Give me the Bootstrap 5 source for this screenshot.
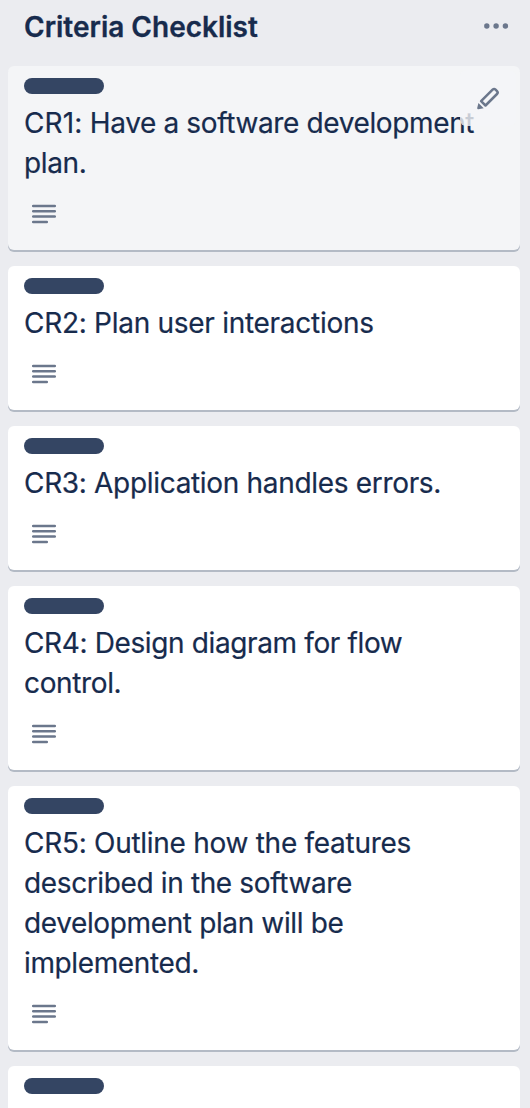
<!DOCTYPE html>
<html lang="en">
<head>
<meta charset="utf-8">
<meta name="viewport" content="width=device-width, initial-scale=1">
<title>Criteria Checklist</title>
<link href="https://cdn.jsdelivr.net/npm/bootstrap@5.3.0/dist/css/bootstrap.min.css" rel="stylesheet">
<style>
  html, body { height: 100%; }
  body { background: #ebecf0; color: #172b4d; font-family: Inter, "Liberation Sans", sans-serif; overflow: hidden; }
  .list-head { height: 66px; padding: 7px 10px 0 16px; }
  .list-title { font-size: 28px; line-height: 40px; font-weight: 600; letter-spacing: 0; -webkit-text-stroke: .3px currentColor; }
  .list-menu { color: #6b778c; width: 28px; height: 8px; margin-top: 15px; }
  .task { background: #fff; border: 0; border-radius: 6px; box-shadow: 0 2px 0 #b3bac5; padding: 12px 16px 0; color: inherit; }
  .task.is-hover { background: #f4f5f7; }
  .task.is-cut { height: 42px; border-radius: 6px 6px 0 0; box-shadow: none; }
  .tag-bar { width: 80px; height: 16px; background: #344563; margin-bottom: 9px; }
  .task-name { font-size: 28px; line-height: 40px; letter-spacing: -.37px; white-space: nowrap; -webkit-text-stroke: .2px currentColor; }
  .medium { letter-spacing: -.32px; }
  .loose { letter-spacing: -.28px; }
  .code { letter-spacing: .1px; }
  .task-meta { height: 67px; padding: 21px 0 0 8px; color: #6b778c; }
  .edit-btn { position: absolute; top: 4px; right: 4px; width: 56px; height: 56px; border-radius: 6px; background: rgba(244,245,247,.8); color: #6b778c; }
</style>
</head>
<body>
<svg class="d-none">
  <symbol id="lines" viewBox="0 0 24 20">
    <path d="M1.2 2H22.8M1.2 7.3H22.8M1.2 12.6H22.8M1.2 18H14.8" fill="none" stroke="currentColor" stroke-width="2.5" stroke-linecap="round"/>
  </symbol>
</svg>
<main class="px-2" style="width:528px">
  <header class="list-head d-flex justify-content-between align-items-start">
    <h2 class="list-title m-0">Criteria Checklist</h2>
    <svg class="list-menu" viewBox="0 0 28 8" fill="currentColor"><circle cx="4.8" cy="4" r="2.7"/><circle cx="14.1" cy="4" r="2.7"/><circle cx="23.4" cy="4" r="2.7"/></svg>
  </header>
  <div class="d-flex flex-column gap-3">
    <article class="card task is-hover">
      <div class="tag-bar rounded-pill"></div>
      <div class="task-name"><span class="code">CR1:</span> Have a software development<br>plan.</div>
      <div class="task-meta"><svg class="d-block" width="24" height="20"><use href="#lines"/></svg></div>
      <button class="edit-btn border-0 p-0" aria-label="Edit card">
        <svg class="d-block" width="56" height="56" viewBox="0 0 56 56">
          <path d="M21.1 31.2L32.6 19.7Q34.1 18.3 35.6 19.7L37 21.1Q38.4 22.6 37 24L25.5 35.5Z" fill="none" stroke="currentColor" stroke-width="2.5" stroke-linejoin="round"/>
          <path d="M18.4 33L23.7 38.2L18.4 39.2Q17 39.3 17.2 38Z" fill="currentColor"/>
        </svg>
      </button>
    </article>
    <article class="card task">
      <div class="tag-bar rounded-pill"></div>
      <div class="task-name loose">CR2: Plan user interactions</div>
      <div class="task-meta"><svg class="d-block" width="24" height="20"><use href="#lines"/></svg></div>
    </article>
    <article class="card task">
      <div class="tag-bar rounded-pill"></div>
      <div class="task-name medium">CR3: Application handles errors.</div>
      <div class="task-meta"><svg class="d-block" width="24" height="20"><use href="#lines"/></svg></div>
    </article>
    <article class="card task">
      <div class="tag-bar rounded-pill"></div>
      <div class="task-name">CR4: Design diagram for flow<br>control.</div>
      <div class="task-meta"><svg class="d-block" width="24" height="20"><use href="#lines"/></svg></div>
    </article>
    <article class="card task">
      <div class="tag-bar rounded-pill"></div>
      <div class="task-name"><span class="loose">CR5: Outline how the features</span><br>described in the software<br>development plan will be<br>implemented.</div>
      <div class="task-meta"><svg class="d-block" width="24" height="20"><use href="#lines"/></svg></div>
    </article>
    <article class="card task is-cut">
      <div class="tag-bar rounded-pill"></div>
    </article>
  </div>
</main>
<script src="https://cdn.jsdelivr.net/npm/bootstrap@5.3.0/dist/js/bootstrap.bundle.min.js"></script>
</body>
</html>
